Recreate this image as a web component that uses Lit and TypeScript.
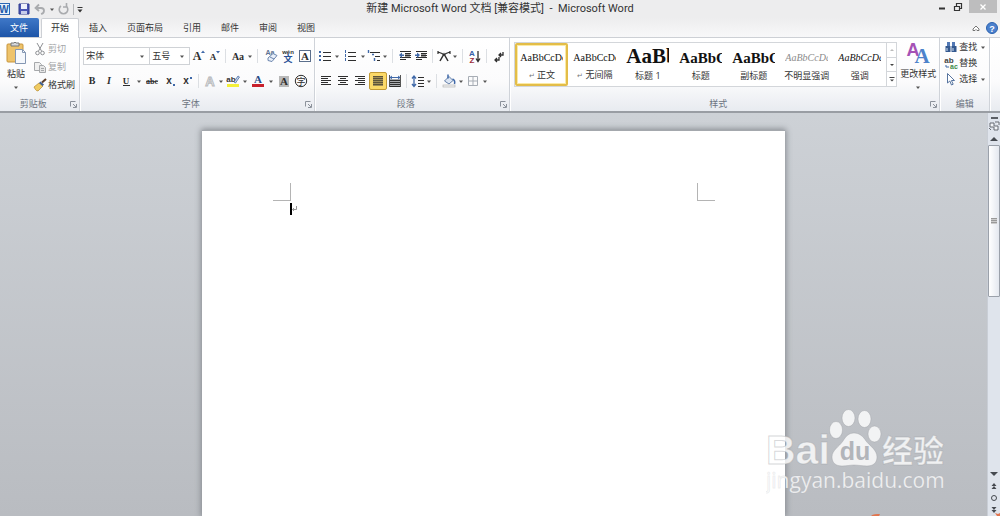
import { LitElement, html, css, svg, nothing, TemplateResult } from "lit";
import { customElement, property } from "lit/decorators.js";
import { classMap } from "lit/directives/class-map.js";

const INK = "#2e2e2e";
const BLUE = "#3f68a8";

const lines = (x: number[], y0: number, step: number, w: number[], color = INK) =>
  w.map((n, i) => svg`<rect x=${x[i % x.length]} y=${y0 + i * step} width=${n} height="1" fill=${color}></rect>`);

const glyph = (t: string, size: number, o: { x?: number; y?: number; fill?: string; extra?: string; sans?: boolean } = {}) =>
  svg`<text x=${o.x ?? 8} y=${o.y ?? 12} font-size=${size} fill=${o.fill ?? INK} text-anchor="middle"
    class=${"g " + (o.sans ? "sans " : "") + (o.extra ?? "")}>${t}</text>`;

const icons: Record<string, unknown> = {
  grow: svg`${glyph("A", 12, { x: 7 })}<path d="M11 5l2-2.5L15 5z" fill=${BLUE}></path>`,
  shrink: svg`${glyph("A", 9, { x: 7 })}<path d="M10 3h4l-2 2.500z" fill=${BLUE}></path>`,
  aa: glyph("Aa", 10),
  clear: svg`<text x="7" y="7" font-size="7" text-anchor="middle" class="g sans" fill="#5d7292">Aa</text>
    <path d="M5 10l5-4.500 4 2-5 6-4-1z" fill="#e9f0fa" stroke="#6d86ae"></path><path d="M7 9l4 2" stroke="#6d86ae"></path>`,
  phonetic: svg`<text x="8" y="6" font-size="6" text-anchor="middle" class="g sans" fill="#333">wén</text>
    <text x="8" y="14" font-size="9" text-anchor="middle" class="g sans" fill="#264f94">文</text>`,
  boxed: svg`<rect x="2.500" y="2.500" width="11" height="11" fill="#fff" stroke="#5b6f8c"></rect>${glyph("A", 11)}`,
  bold: glyph("B", 10, { y: 11 }),
  italic: glyph("I", 10, { y: 11, extra: "it" }),
  underline: svg`${glyph("U", 9, { y: 11 })}<path d="M5 12.500h7" stroke=${INK}></path>`,
  strike: svg`${glyph("abc", 8, { y: 11 })}<path d="M2 8.500h12" stroke=${INK} stroke-width=".8"></path>`,
  sub: svg`${glyph("x", 10, { x: 7, y: 11, sans: true })}<path d="M11 12h2" stroke=${BLUE} stroke-width="2"></path>`,
  sup: svg`${glyph("x", 10, { x: 7, y: 11, sans: true })}<path d="M11 5h2" stroke=${BLUE} stroke-width="2"></path>`,
  outline: svg`<text x="8" y="13" font-size="13" text-anchor="middle" class="g sans" fill="#fff" stroke="#b8babd">A</text>`,
  highlight: svg`<text x="6" y="9" font-size="8" text-anchor="middle" class="g sans" fill="#333">ab</text>
    <path d="M9 9l4-6 1.500 1-4 6z" fill="#c9d8ee" stroke="#4c6ea5" stroke-width=".8"></path><rect x="2" y="11" width="12" height="3" fill="#f4f03a"></rect>`,
  color: svg`<text x="8" y="10" font-size="11" text-anchor="middle" class="g" fill="#274b87">A</text><rect x="2" y="11" width="12" height="3" fill="#c8202c"></rect>`,
  shade: svg`<rect x="3" y="3" width="10" height="11" fill="#b9b9b9"></rect>${glyph("A", 11)}`,
  circled: svg`<circle cx="8" cy="8" r="5.700" fill="none" stroke=${INK}></circle><text x="8" y="11.500" font-size="9" text-anchor="middle" class="sans" fill=${INK}>字</text>`,

  bullets: svg`${[3, 7, 11].map(y => svg`<rect x="2" y=${y} width="2" height="2" fill=${BLUE}></rect>`)}${lines([6], 4, 4, [8, 8, 8])}`,
  numbers: svg`${[3, 7, 11].map(y => svg`<path d="M3.500 ${y - 1}v3" stroke=${BLUE}></path>`)}${lines([6], 4, 4, [8, 8, 8])}`,
  multi: svg`<path d="M2.500 2v3M6 6.500h2M8.500 10v3" stroke=${BLUE} stroke-width="1.400"></path>${lines([4, 9, 11], 4, 4, [10, 5, 3])}`,
  outdent: svg`${lines([3, 8, 8, 3, 3], 3, 2, [11, 6, 6, 11, 6])}<path d="M2 7l3-2.500v2h2v1.500H5v2z" fill=${BLUE}></path><path d="M8 6h5M8 8h5" stroke=${INK}></path>`,
  indent: svg`${lines([3, 8, 8, 3, 3], 3, 2, [11, 6, 6, 11, 6])}<path d="M7 7L4 4.500v2H2v1.500h2v2z" fill=${BLUE}></path><path d="M8 6h5M8 8h5" stroke=${INK}></path>`,
  asian: svg`<path d="M4 13l4-7 4 7" fill="none" stroke=${INK} stroke-width="1.500"></path><path d="M2 4l4 1.500L8 7l2-1.500L14 4M2 3v3M14 3v3" fill="none" stroke=${INK} stroke-width="1.200"></path>`,
  sort: svg`<text x="5" y="7.500" font-size="8" text-anchor="middle" class="g sans" fill="#3560a8">A</text>
    <text x="5" y="14.500" font-size="8" text-anchor="middle" class="g sans" fill="#9c2d3c">Z</text><path d="M11 3v10M9 10.500l2 3 2-3" fill="none" stroke=${INK} stroke-width="1.300"></path>`,
  marks: svg`<path d="M12 4v3H8M10 5L8 7l2 2M8 9v3H4M6 10l-2 2 2 2" fill="none" stroke=${INK} stroke-width="1.300"></path>`,
  left: lines([3], 3, 2, [10, 7, 10, 7, 10]),
  center: lines([3, 5], 3, 2, [10, 6, 10, 6, 10]),
  right: lines([3, 6], 3, 2, [10, 7, 10, 7, 10]),
  justify: svg`<rect x="3" y="3" width="10" height="10" fill="#a18f56"></rect>${lines([3], 3, 2, [10, 10, 10, 10, 10], "#5d543a")}`,
  distribute: svg`<rect x="3" y="6" width="10" height="8" fill="#a9abae"></rect><path d="M2.500 2v12M13.500 2v12" stroke="#555"></path><path d="M3 4.500h10M5 3L3 4.500 5 6M11 3l2 1.500L11 6" fill="none" stroke=${BLUE}></path>
    ${lines([3], 7, 2, [10, 10, 10, 10])}`,
  spacing: svg`<path d="M4 4v9M2 5.500L4 3l2 2.500M2 11l2 2.500L6 11" fill="none" stroke=${BLUE} stroke-width="1.300"></path>${lines([8], 4, 3, [6, 6, 6, 6])}`,
  fill: svg`<path d="M3.500 8L8 3.500l4 4L8 11z" fill="#dce6f4" stroke="#6681aa"></path><path d="M7 1.500v4M11.500 6c2.500 1 2.500 3 2 5" fill="none" stroke="#3f68a8" stroke-width="1.500"></path><rect x="2" y="12" width="12" height="2" fill="#f4f4f4" stroke="#a8a8a8" stroke-width=".6"></rect>`,
  borders: svg`<path d="M3.500 3.500h9v9h-9zM8 3.500v9M3.500 8h9" fill="none" stroke="#a7adb5"></path>`,

  cut: svg`<path d="M5 2l4.500 8M11 2L6.500 10" stroke="#8e9094" fill="none"></path><circle cx="5.500" cy="12" r="1.800" fill="none" stroke="#8e9094"></circle><circle cx="10.500" cy="12" r="1.800" fill="none" stroke="#8e9094"></circle>`,
  copy: svg`<path d="M2.500 3.500h5l2 2v6h-7z" fill="#f0f0f0" stroke="#a6a8ab"></path><path d="M7.500 6.500h4l2 2v5h-6z" fill="#e6e6e6" stroke="#a6a8ab"></path><path d="M9 9.500h3M9 11.500h3" stroke="#a6a8ab"></path>`,
  brush: svg`<path d="M2 10l5-4 4 3-5 5c-2 0-3-2-4-4z" fill="#f0cb62" stroke="#b58a2f" stroke-width=".7"></path><path d="M7 6l1.500-1.500 3.500 3-1.500 1.500z" fill="#42608f"></path><path d="M10 5.500L14 2" stroke="#5c3d28" stroke-width="2"></path>`,
  find: svg`<path d="M4 3h3v4H4zM9 3h3v4H9z" fill="#5379b5"></path><path d="M2.500 7h5v6h-5zM8.500 7h5v6h-5z" fill="#34598f"></path><path d="M4 9v3M10 9v3" stroke="#cfe0f5"></path>`,
  replace: svg`<text x="6" y="8" font-size="8" text-anchor="middle" class="g sans" fill="#444">ab</text><text x="11" y="14" font-size="7" text-anchor="middle" class="g sans" fill="#3d8a4a">ac</text><path d="M3 10v2h3" stroke=${BLUE} fill="none"></path>`,
  pick: svg`<path d="M4.500 2.500v9.500l2.300-2 1.700 4 1.700-.8-1.800-3.700h3.100z" fill="#fff" stroke="#56749f"></path>`,

  word: svg`<rect x="-4" y="2.500" width="13.500" height="11" fill="#e8f1fb" stroke="#2d67b4"></rect><text x="4" y="12" font-size="10" text-anchor="middle" class="g sans" fill="#235ba8">W</text>`,
  save: svg`<path d="M3 3h10v10H3z" fill="#4a55b4" stroke="#2f3a8e"></path><rect x="5" y="3" width="6" height="5" fill="#eef1fb"></rect><rect x="5" y="10" width="6" height="3" fill="#c7cdea"></rect>`,
  undo: svg`<path d="M4 7h5c4 0 4 5 0 6M7 3.500L3.500 7 7 10" fill="none" stroke="#a9abae" stroke-width="1.800"></path>`,
  redo: svg`<path d="M11 5a4.300 4.300 0 1 1-5 0M11.500 2v4H8" fill="none" stroke="#a9abae" stroke-width="1.600"></path>`,
  quick: svg`<path d="M5.500 6.500h5" stroke="#333"></path><path d="M5.500 8.500h5L8 11.500z" fill="#333"></path>`,
  min: svg`<path d="M5 8.500h6" stroke="#333" stroke-width="2"></path>`,
  restore: svg`<path d="M4.500 6.500h5v4h-5zM6.500 6V3.500h5v5H10" fill="none" stroke="#333" stroke-width="1.200"></path>`,
  close: svg`<path d="M5.500 5.500l5 5M10.500 5.500l-5 5" stroke="#fff" stroke-width="1.300"></path>`,
  fold: svg`<path d="M5 9l3-3 3 3v1.500H9L8 9.500l-1 1H5z" fill="#fff" stroke="#666" stroke-width=".9"></path>`,
  help: svg`<circle cx="8" cy="8" r="5.500" fill="#4b80cd" stroke="#2b62af"></circle><text x="8" y="11.500" font-size="9" text-anchor="middle" class="g sans" fill="#fff">?</text>`,
  launch: svg`<path d="M5.500 10.500v-5h5M8 8l3 3M11.500 8v3.500H8" fill="none" stroke="#8c929b"></path>`,
  ruler: svg`<path d="M4 5h4v3h4v4H8V9H4zM9 4h4v3" fill="#f3f5f8" stroke="#666b73"></path><path d="M3 10l2 2" stroke="#666b73"></path>`,
  up: svg`<path d="M4 10h8L8 6z" fill="#464a50"></path>`,
  down: svg`<path d="M4 6h8l-4 4z" fill="#464a50"></path>`,
  pageUp: svg`<path d="M5.500 8L8 5l2.500 3zM5.500 11L8 8l2.500 3z" fill="#464a50"></path>`,
  pageDown: svg`<path d="M5.500 5L8 8l2.500-3zM5.500 8L8 11l2.500-3z" fill="#464a50"></path>`,
  browse: svg`<circle cx="8" cy="8" r="2.500" fill="none" stroke="#464a50"></circle>`,
  scrollUp: svg`<path d="M6 9h4L8 7z" fill="#bbb"></path>`,
  scrollDown: svg`<path d="M6 7h4L8 9z" fill="#444"></path>`,
  more: svg`<path d="M5.500 6.500h5" stroke="#444"></path><path d="M6 8.500h4l-2 2z" fill="#444"></path>`,
};

const icon = (name: string) => html`<svg class="icon" viewBox="0 0 16 16" aria-hidden="true">${icons[name]}</svg>`;
const arrow = html`<svg class="arrow" viewBox="0 0 4 3" aria-hidden="true"><path d="M0 .5h4L2 3z" fill="#555"></path></svg>`;

type Tool = [name: string, label: string, size: "s" | "m" | "l", menu?: boolean] | "|";

const fontTop: Tool[] = [
  ["grow", "增大字体", "m"], ["shrink", "缩小字体", "m"], "|", ["aa", "更改大小写", "m", true], "|",
  ["clear", "清除格式", "l"], ["phonetic", "拼音指南", "m"], ["boxed", "字符边框", "l"],
];
const fontBottom: Tool[] = [
  ["bold", "加粗", "l"], ["italic", "倾斜", "m"], ["underline", "下划线", "l", true], ["strike", "删除线", "l"],
  ["sub", "下标", "l"], ["sup", "上标", "m"], "|", ["outline", "文本效果", "s", true], ["highlight", "突出显示", "m", true],
  ["color", "字体颜色", "l", true], ["shade", "字符底纹", "l"], ["circled", "带圈字符", "m"],
];
const paraTop: Tool[] = [
  ["bullets", "项目符号", "m", true], ["numbers", "编号", "l", true], ["multi", "多级列表", "s", true], "|",
  ["outdent", "减少缩进量", "m"], ["indent", "增加缩进量", "m"], "|", ["asian", "中文版式", "s", true], "|",
  ["sort", "排序", "m"], "|", ["marks", "显示编辑标记", "m"],
];
const paraBottom: Tool[] = [
  ["left", "左对齐", "l"], ["center", "居中", "m"], ["right", "右对齐", "l"], ["justify", "两端对齐", "l"],
  ["distribute", "分散对齐", "m"], "|", ["spacing", "行距", "s", true], "|", ["fill", "底纹", "m", true], ["borders", "边框", "m", true],
];

const shared = css`
  *, *::before, *::after { box-sizing: border-box; }
  button, select, a {
    font: inherit; color: inherit; background: none; border: 0; padding: 0; margin: 0;
    text-decoration: none; cursor: default;
  }
  button { display: flex; align-items: center; justify-content: center; }
  .icon { width: 16px; height: 16px; flex: none; display: block; overflow: hidden; }
  .arrow { width: 4px; height: 3px; flex: none; display: block; }
  .g { font-family: "Liberation Serif", serif; font-weight: 700; }
  .sans { font-family: "Liberation Sans", "Noto Sans CJK SC", sans-serif; }
  .it { font-style: italic; }
`;

@customElement("ribbon-tools")
class RibbonTools extends LitElement {
  @property({ attribute: false }) tools: Tool[] = [];
  @property() active = "";
  static styles = [shared, css`
    :host { display: flex; align-items: center; height: 18px; }
    button { height: 18px; flex: none; overflow: visible; }
    .s { width: 14px; } .m { width: 16px; } .l { width: 18px; }
    .drop { width: 8px; }
    .bar { width: 1px; height: 14px; margin: 0 4px 0 3px; background: #dcdfe3; flex: none; }
    .on { background: #fbd968; border: 1px solid #c29a36; border-radius: 2px; }
  `];
  render() {
    return this.tools.map(t => t === "|" ? html`<span class="bar"></span>` : html`
      <button class=${classMap({ [t[2]]: true, on: t[0] === this.active })} aria-label=${t[1]}>${icon(t[0])}</button>
      ${t[3] ? html`<button class="drop" aria-label=${t[1] + "选项"}>${arrow}</button>` : nothing}`);
  }
}

@customElement("ribbon-group")
class RibbonGroup extends LitElement {
  @property() label = "";
  @property({ type: Boolean }) launcher = false;
  static styles = [shared, css`
    :host { display: flex; flex-direction: column; border-right: 1px solid #cfd3d9; box-shadow: 1px 0 #fff; flex: none; }
    .body { flex: 1; display: flex; }
    footer { height: 16px; padding-top: 2px; display: flex; align-items: center; color: #6c7480; }
    span { flex: 1; text-align: center; white-space: nowrap; }
    button { width: 13px; height: 13px; }
  `];
  render() {
    return html`<div class="body"><slot></slot></div>
      <footer><span>${this.label}</span>${this.launcher ? html`<button aria-label=${this.label + "设置"}>${icon("launch")}</button>` : nothing}</footer>`;
  }
}

@customElement("style-gallery")
class StyleGallery extends LitElement {
  static styles = [shared, css`
    :host { display: flex; height: 45px; border: 1px solid #d3d6da; background: #fff; }
    .item {
      width: 53px; flex-direction: column; justify-content: space-between; overflow: hidden;
      padding: 0 5px 4px; font-size: 9px; line-height: 12px; color: #333; white-space: nowrap;
    }
    .on { border: 2px solid #e3bd48; border-radius: 2px; box-shadow: inset 0 0 0 1px #fbeaa6; padding: 0 3px 2px; }
    .ret { color: #777; font-size: 7px; }
    .sample {
      width: 100%; flex: 1; overflow: hidden; text-align: left; color: #111;
      font-family: "Liberation Serif", serif; font-size: 10px; line-height: 30px;
    }
    .on .sample { line-height: 26px; }
    .h1 { font-size: 21px; font-weight: 700; line-height: 26px; }
    .h2 { font-size: 15px; font-weight: 700; }
    .em { font-style: italic; }
    .faint { color: #8b8b8b; }
    .scroll { display: flex; flex-direction: column; width: 10px; border-left: 1px solid #d3d6da; }
    .scroll button { flex: 1; overflow: hidden; }
    .scroll button + button { border-top: 1px solid #d3d6da; }
  `];
  render() {
    const items: [string, string, string, boolean?][] = [
      ["AaBbCcDd", "", "正文", true], ["AaBbCcDd", "", "无间隔", true], ["AaBb", "h1", "标题 1"], ["AaBbC", "h2", "标题"],
      ["AaBbC", "h2", "副标题"], ["AaBbCcDd", "em faint", "不明显强调"], ["AaBbCcDd", "em", "强调"],
    ];
    return html`${items.map(([s, c, n, ret], i) => html`
      <button class=${classMap({ item: true, on: i === 0 })}><span class=${"sample " + c}>${s}</span><span>${ret ? html`<span class="ret">↵</span> ` : nothing}${n}</span></button>`)}
      <div class="scroll">
        <button aria-label="上一行">${icon("scrollUp")}</button><button aria-label="下一行">${icon("scrollDown")}</button><button aria-label="其他">${icon("more")}</button>
      </div>`;
  }
}

@customElement("app-root")
class AppRoot extends LitElement {
  static styles = [shared, css`
    :host {
      display: flex; flex-direction: column; height: 100vh; overflow: hidden; color: #333;
      font: 9px/12px "Open Sans", "Noto Sans CJK SC", sans-serif; background: #f3f3f4;
    }
    .title { display: grid; grid-template-columns: 1fr auto 1fr; height: 18px; align-items: center; background: #ededee; }
    h1 { margin: 0; font: 400 11px/18px Roboto, "Noto Sans CJK SC", sans-serif; white-space: pre; }
    .quick, .window { display: flex; align-items: center; }
    .quick .gap { width: 1px; height: 11px; background: #b5b7ba; margin-left: 2px; }
    .quick .drop { width: 7px; height: 16px; }
    .quick .last { width: 12px; overflow: hidden; }
    .window { justify-content: flex-end; align-items: flex-start; height: 18px; padding-right: 3px; }
    .window .close { width: 28px; height: 13px; background: #bdbdbe; margin-left: 3px; }
    .tabs {
      display: flex; height: 20px; align-items: stretch; border-bottom: 1px solid #cdd0d5;
      background: linear-gradient(#ededee, #f8f8f9);
    }
    .tabs a { padding: 0 10px; line-height: 20px; white-space: nowrap; }
    .tabs .file { background: linear-gradient(#3f78c8, #1d55a8); color: #fff; width: 39px; margin-right: 2px; border-radius: 0 2px 0 0; }
    .tabs .current { background: #fff; border: 1px solid #cdd0d5; border-bottom: 0; border-radius: 2px 2px 0 0; padding: 0 9px; line-height: 18px; margin-bottom: -1px; }
    .tabs .tail { margin-left: auto; display: flex; align-items: center; }
    .ribbon {
      display: flex; height: 75px; flex: none; border-bottom: 2px solid #999da3;
      background: linear-gradient(#fff, #fbfbfc 60%, #e8ebf0);
    }
    .paste { width: 32px; flex-direction: column; justify-content: flex-start; padding-top: 3px; }
    .paste .big { width: 22px; height: 24px; }
    .paste span { padding: 3px 0 6px; }
    .edits { display: flex; flex-direction: column; padding: 2px 2px 0 0; }
    .edits button { justify-content: flex-start; height: 18px; }
    .edits .off { color: #a3a5a8; }
    .stack { display: flex; flex-direction: column; gap: 7px; padding: 9px 0 0 3px; }
    .line { display: flex; }
    .combo { display: grid; grid-template-columns: 1fr 9px; align-items: center; height: 18px; border: 1px solid #cfd2d6; background: #fff; }
    .combo + .combo { border-left: 0; }
    .combo select { grid-area: 1 / 1 / 2 / 3; appearance: none; height: 16px; padding-left: 2px; outline: 0; width: 100%; }
    .combo .arrow { grid-area: 1 / 2; pointer-events: none; }
    .face { width: 67px; } .size { width: 40px; }
    .para { padding: 9px 2px 0 2px; }
    style-gallery { margin: 4px 0 0 4px; }
    .change { width: 42px; flex-direction: column; justify-content: flex-start; padding-top: 4px; white-space: nowrap; }
    .change .big { width: 24px; height: 22px; }
    .change span { padding: 4px 0 6px; }
    .find { display: flex; flex-direction: column; padding: 1px 4px 0 3px; }
    .find button { height: 16px; justify-content: flex-start; }
    .find .arrow { margin-left: 4px; }
    .work { flex: 1; min-height: 0; display: flex; background: linear-gradient(#cdd1d6, #b9bcc1); position: relative; }
    main { flex: 1; display: flex; justify-content: center; padding-top: 17px; overflow: hidden; }
    .page { width: 583px; background: #fff; border-top: 1px solid #a4a8ad; box-shadow: 0 0 6px 1px #85898f; padding: 52px 70px 0 71px; }
    .corners { display: flex; justify-content: space-between; }
    .corners i { width: 18px; height: 18px; border-bottom: 1px solid #b4b4b4; }
    .corners i:first-child { border-right: 1px solid #b4b4b4; }
    .corners i:last-child { border-left: 1px solid #b4b4b4; }
    .para-text { margin: 2px 0 0 17px; display: flex; align-items: center; height: 12px; }
    .caret { width: 2px; height: 12px; background: #000; }
    .mark { width: 5px; height: 6px; display: block; }
    .rail { width: 13px; display: flex; flex-direction: column; align-items: center; background: #dfe4ec; border-left: 1px solid #c9ced6; padding-top: 4px; }
    .rail button { width: 13px; height: 12px; overflow: hidden; flex: none; }
    .split { width: 7px; height: 2px; background: #5b5f65; }
    .rail .view { height: 14px; }
    .track { flex: 1; width: 100%; }
    .thumb { height: 47%; border: 1px solid #9ba1aa; border-radius: 1px; background: linear-gradient(90deg, #fff, #e4e8ef); display: flex; align-items: center; justify-content: center; }
    .thumb i { width: 6px; height: 6px; background: repeating-linear-gradient(#999 0 1px, #ccc 1px 2px); }
    .logo { position: absolute; right: 50px; bottom: 18px; width: 184px; height: 92px; }
    .speck { position: absolute; right: 0; bottom: 0; width: 132px; height: 4px; }
    .wm { font-family: "Liberation Sans", sans-serif; font-weight: 700; }
    .wc { font-family: "Noto Sans CJK SC", sans-serif; font-weight: 700; }
    .wu { font-family: "Open Sans", sans-serif; }
  `];

  render(): TemplateResult {
    const tabs = ["插入", "页面布局", "引用", "邮件", "审阅", "视图"];
    return html`
      <header class="title">
        <div class="quick">
          <button aria-label="Word">${icon("word")}</button>
          <button aria-label="保存">${icon("save")}</button>
          <button aria-label="撤消">${icon("undo")}</button>
          <button class="drop" aria-label="撤消列表">${arrow}</button>
          <button aria-label="重复">${icon("redo")}</button>
          <span class="gap"></span>
          <button class="last" aria-label="自定义快速访问工具栏">${icon("quick")}</button>
        </div>
        <h1>新建 Microsoft Word 文档 [兼容模式]  -  Microsoft Word</h1>
        <div class="window">
          <button aria-label="最小化">${icon("min")}</button>
          <button aria-label="还原">${icon("restore")}</button>
          <button class="close" aria-label="关闭">${icon("close")}</button>
        </div>
      </header>
      <nav class="tabs">
        <a class="file" href="#">文件</a><a class="current" href="#">开始</a>
        ${tabs.map(t => html`<a href="#">${t}</a>`)}
        <div class="tail"><button aria-label="折叠功能区">${icon("fold")}</button><button aria-label="帮助">${icon("help")}</button></div>
      </nav>
      <section class="ribbon">
        <ribbon-group label="剪贴板" launcher>
          <button class="paste">
            <svg class="big" viewBox="0 0 22 24" aria-hidden="true">
              <rect x="2" y="3" width="16" height="18" rx="1" fill="#eec36b" stroke="#c8953c"></rect>
              <path d="M6 5V2h3l1-1 1 1h3v3z" fill="#d6d8dc" stroke="#777"></path>
              <path d="M10.500 8.500h7l3 3v11h-10z" fill="#f5f8fc" stroke="#8497b3"></path><path d="M17.500 8.500v3h3" fill="none" stroke="#8497b3"></path>
            </svg><span>粘贴</span>${arrow}
          </button>
          <div class="edits">
            <button class="off">${icon("cut")}剪切</button>
            <button class="off">${icon("copy")}复制</button>
            <button>${icon("brush")}格式刷&nbsp;</button>
          </div>
        </ribbon-group>
        <ribbon-group label="字体" launcher>
          <div class="stack">
            <div class="line">
              <label class="combo face"><select aria-label="字体"><option>宋体</option></select>${arrow}</label>
              <label class="combo size"><select aria-label="字号"><option>五号</option></select>${arrow}</label>
              <ribbon-tools .tools=${fontTop}></ribbon-tools>
            </div>
            <ribbon-tools .tools=${fontBottom}></ribbon-tools>
          </div>
        </ribbon-group>
        <ribbon-group label="段落" launcher>
          <div class="stack para">
            <ribbon-tools .tools=${paraTop}></ribbon-tools>
            <ribbon-tools .tools=${paraBottom} active="justify"></ribbon-tools>
          </div>
        </ribbon-group>
        <ribbon-group label="样式" launcher>
          <style-gallery></style-gallery>
          <button class="change">
            <svg class="big" viewBox="0 0 24 22" aria-hidden="true">
              <text x="7" y="14" font-size="18" text-anchor="middle" class="g sans" fill="#a552b5">A</text>
              <text x="16" y="21" font-size="21" text-anchor="middle" class="g" fill="#4d83cb">A</text>
            </svg><span>更改样式</span>${arrow}
          </button>
        </ribbon-group>
        <ribbon-group label="编辑">
          <div class="find">
            <button>${icon("find")}查找${arrow}</button>
            <button>${icon("replace")}替换</button>
            <button>${icon("pick")}选择${arrow}</button>
          </div>
        </ribbon-group>
      </section>
      <div class="work">
        <main>
          <article class="page">
            <div class="corners"><i></i><i></i></div>
            <div class="para-text"><span class="caret"></span>
              <svg class="mark" viewBox="0 0 5 6" aria-hidden="true"><path d="M4.500 0v3.500h-4M2 2L.5 3.500 2 5" fill="none" stroke="#999"></path></svg></div>
          </article>
        </main>
        <aside class="rail">
          <span class="split"></span>
          <button class="view" aria-label="标尺">${icon("ruler")}</button>
          <button aria-label="向上滚动">${icon("up")}</button>
          <div class="track"><div class="thumb"><i></i></div></div>
          <button aria-label="向下滚动">${icon("down")}</button>
          <button aria-label="前一页">${icon("pageUp")}</button>
          <button aria-label="选择浏览对象">${icon("browse")}</button>
          <button aria-label="下一页">${icon("pageDown")}</button>
        </aside>
        <svg class="logo" viewBox="0 0 184 92" role="img" aria-label="Baidu 经验">
          <g fill="#fff" fill-opacity=".8" stroke="#9a9ea3" stroke-opacity=".4" stroke-width="1">
            <text x="0" y="58" font-size="41" class="wm">Bai</text>
            <ellipse cx="70" cy="24" rx="6.500" ry="8.500"></ellipse><ellipse cx="82.500" cy="12" rx="6.500" ry="8.500"></ellipse>
            <ellipse cx="98.500" cy="13" rx="6.500" ry="8.500"></ellipse><ellipse cx="108.500" cy="28" rx="6.500" ry="8"></ellipse>
            <path d="M88 27c-5 0-8 3-11 8-4 6-11 9-11 16 0 6 4 9 10 9 5 0 8-1 12-1s8 1 13 1c6 0 10-3 10-9 0-7-7-11-11-16-3-5-7-8-12-8z"></path>
            <text x="116" y="56" font-size="31" class="wc">经验</text>
          </g>
          <text x="0" y="82" font-size="21" class="wu" fill="#fff" fill-opacity=".85" stroke="#a4a8ad" stroke-opacity=".2">jingyan.baidu.com</text>
          <text x="89" y="54" font-size="25" text-anchor="middle" class="wm" fill="#b2b5ba">du</text>
        </svg>
        <svg class="speck" viewBox="0 0 132 4" aria-hidden="true"><path d="M3 4c2-2 5-2 9-2l-1 2zM127 1l3 1 2-1v3h-3z" fill="#e0754f"></path></svg>
      </div>`;
  }
}
